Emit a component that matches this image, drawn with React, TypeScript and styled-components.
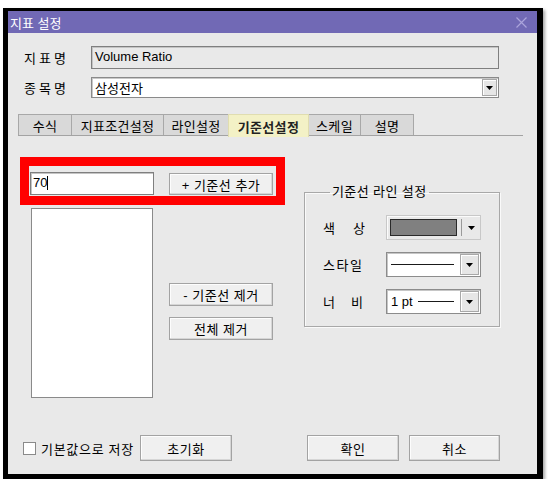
import React from 'react';
import styled, { createGlobalStyle } from 'styled-components';

const GlobalStyle = createGlobalStyle`
  html, body {
    margin: 0;
    padding: 0;
    background: #ffffff;
  }
  body {
    font-family: "Liberation Sans", "Noto Sans CJK KR", sans-serif;
    font-size: 13px;
    color: #000;
  }
`;

const Page = styled.div`
  padding: 8px 0 0 3px;
`;

const Window = styled.div`
  box-sizing: border-box;
  width: 540px;
  height: 471px;
  border-style: solid;
  border-color: #000;
  border-width: 3px 6px 5px 5px;
  background: #e9e9e9;
  display: flex;
  flex-direction: column;
  box-shadow: 2px 2px 3px rgba(0, 0, 0, 0.35);
`;

const TitleBar = styled.div`
  height: 22px;
  flex-shrink: 0;
  background: #7169b5;
  color: #fff;
  display: flex;
  align-items: center;
  justify-content: space-between;
  padding: 0 10px 0 2px;
  font-size: 13px;
`;

const Body = styled.div`
  flex: 1;
  display: flex;
  flex-direction: column;
  padding: 13px 0 13px;
`;

const FieldRow = styled.div<{ $top?: number }>`
  display: grid;
  grid-template-columns: 67px 408px;
  align-items: center;
  padding-left: 16px;
  margin-top: ${(p) => p.$top ?? 0}px;
`;

const Spaced = styled.span<{ $width: number }>`
  display: flex;
  justify-content: space-between;
  width: ${(p) => p.$width}px;
`;

const ReadonlyField = styled.div`
  box-sizing: border-box;
  height: 23px;
  border: 1px solid #7f7f7f;
  box-shadow: inset 1px 1px 0 #c4c4c4;
  background: #e9e9e9;
  padding: 2px 3px 0;
  line-height: 16px;
`;

const Combo = styled.div<{ $height: number }>`
  box-sizing: border-box;
  height: ${(p) => p.$height}px;
  border: 1px solid #8a8a8a;
  box-shadow: inset 1px 1px 0 #c8c8c8;
  background: #fff;
  display: flex;
  align-items: center;
  justify-content: space-between;
  padding: 0 1px 0 3px;
`;

const DropButton = styled.div<{ $w: number; $h: number }>`
  box-sizing: border-box;
  width: ${(p) => p.$w}px;
  height: ${(p) => p.$h}px;
  background: #e6e6e6;
  border: 1px solid #a8a8a8;
  box-shadow: inset 1px 1px 0 #fff;
  display: flex;
  align-items: center;
  justify-content: center;
`;

const TabBar = styled.div`
  display: flex;
  align-items: flex-start;
  margin: 16px 0 0 10px;
  width: 505px;
  height: 21px;
  border-bottom: 1px solid #a3a3a3;
`;

const Tab = styled.div<{ $w: number; $active?: boolean }>`
  box-sizing: border-box;
  width: ${(p) => p.$w}px;
  height: ${(p) => (p.$active ? 23 : 21)}px;
  margin-left: -1px;
  display: flex;
  align-items: center;
  justify-content: center;
  background: ${(p) => (p.$active ? '#f3f1c6' : '#d9d9d9')};
  border: 1px solid ${(p) => (p.$active ? '#e0ddb0' : '#a8a8a8')};
  border-bottom: none;
  font-weight: ${(p) => (p.$active ? 700 : 400)};
  color: ${(p) => (p.$active ? '#222' : '#000')};
  letter-spacing: 0.3px;
  position: relative;
  z-index: ${(p) => (p.$active ? 1 : 0)};
  &:first-child {
    margin-left: 0;
  }
`;

const TabContent = styled.div`
  display: flex;
  align-items: flex-start;
  padding-left: 22px;
  margin-top: 36px;
`;

const LeftPane = styled.div`
  position: relative;
  display: grid;
  grid-template-columns: 124px 104px;
  column-gap: 15px;
  row-gap: 13px;
`;

const Highlight = styled.div`
  position: absolute;
  left: -10px;
  top: -15px;
  width: 265px;
  height: 48px;
  box-sizing: border-box;
  border: 9px solid #ff0000;
  pointer-events: none;
`;

const TextInput = styled.div`
  box-sizing: border-box;
  height: 23px;
  border: 1px solid #7f7f7f;
  box-shadow: inset 1px 1px 0 #c4c4c4;
  background: #fff;
  padding: 2px 2px 0;
  display: flex;
  align-items: flex-start;
  line-height: 16px;
`;

const Caret = styled.span`
  display: inline-block;
  width: 1px;
  height: 14px;
  margin-top: 1px;
  background: #000;
`;

const ListBox = styled.div`
  box-sizing: border-box;
  height: 190px;
  width: 122px;
  margin-left: 1px;
  border: 1px solid #8a8a8a;
  background: #fff;
`;

const ButtonStack = styled.div`
  display: flex;
  flex-direction: column;
  gap: 11px;
  padding-top: 75px;
`;

const Button = styled.button<{ $w: number; $h: number; $top?: number; $left?: number }>`
  box-sizing: border-box;
  width: ${(p) => p.$w}px;
  height: ${(p) => p.$h}px;
  margin-top: ${(p) => p.$top ?? 0}px;
  margin-left: ${(p) => p.$left ?? 0}px;
  padding: 0;
  background: #f0f0f0;
  border: 1px solid #a3a3a3;
  box-shadow: inset -1px -1px 0 #d6d6d6, inset 1px 1px 0 #fdfdfd;
  font-family: "Liberation Sans", "Noto Sans CJK KR", sans-serif;
  font-size: 13px;
  letter-spacing: 0.5px;
  color: #000;
  white-space: pre;
`;

const GroupBox = styled.fieldset`
  box-sizing: border-box;
  width: 196px;
  height: 143px;
  margin: 12px 0 0 31px;
  padding: 15px 0 0 18px;
  border: 1px solid #a8a8a8;
  box-shadow: 1px 1px 0 #fafafa, inset 1px 1px 0 #fafafa;
  display: grid;
  grid-template-columns: 63px 95px;
  grid-auto-rows: 25px;
  row-gap: 12px;
  align-items: center;
  align-content: start;
`;

const Legend = styled.legend`
  margin-left: 7px;
  padding: 0 2px;
  line-height: 16px;
  letter-spacing: 0.4px;
`;

const ColorPicker = styled.div`
  box-sizing: border-box;
  height: 25px;
  border: 1px solid #c8c8c8;
  box-shadow: inset 1px 1px 0 #fbfbfb;
  display: flex;
  align-items: center;
  padding: 0 0 0 3px;
`;

const Swatch = styled.div<{ $color: string }>`
  box-sizing: border-box;
  width: 67px;
  height: 17px;
  background: ${(p) => p.$color};
  border: 1px solid #2a2a2a;
`;

const Divider = styled.div`
  width: 1px;
  height: 17px;
  margin-left: 4px;
  background: #9a9a9a;
`;

const ArrowCell = styled.div`
  flex: 1;
  display: flex;
  justify-content: center;
`;

const LineCombo = styled.div`
  box-sizing: border-box;
  height: 25px;
  border: 1px solid #8c8c8c;
  box-shadow: inset 1px 1px 0 #c6c6c6;
  background: #fff;
  display: flex;
  align-items: center;
  padding: 0 1px 0 4px;
`;

const LineText = styled.span`
  margin-right: 5px;
  line-height: 16px;
`;

const Line = styled.div`
  flex: 1;
  height: 1px;
  background: #1a1a1a;
  margin-right: 6px;
`;

const BottomRow = styled.div`
  margin-top: auto;
  display: flex;
  align-items: center;
  padding: 0 37px 0 15px;
`;

const Check = styled.div`
  box-sizing: border-box;
  width: 13px;
  height: 13px;
  background: #fff;
  border: 1px solid #8a8a8a;
  margin-right: 5px;
`;

const CheckLabel = styled.span`
  margin-right: 6px;
  letter-spacing: 0.7px;
`;

const Spacer = styled.div`
  flex: 1;
`;

const Arrow = () => (
  <svg width="7" height="4" viewBox="0 0 7 4">
    <path d="M0 0h7L3.5 4z" fill="#000" />
  </svg>
);

const CloseIcon = () => (
  <svg width="11" height="11" viewBox="0 0 11 11">
    <path d="M0.5 0.5l10 10M10.5 0.5l-10 10" stroke="#aba4db" strokeWidth="1.2" />
  </svg>
);

const SpacedText = ({ text, width }: { text: string; width: number }) => (
  <Spaced $width={width}>
    {text.split('').map((c, i) => (
      <span key={i}>{c}</span>
    ))}
  </Spaced>
);

const tabs = [
  { label: '수식', w: 54 },
  { label: '지표조건설정', w: 93 },
  { label: '라인설정', w: 66 },
  { label: '기준선설정', w: 81, active: true },
  { label: '스케일', w: 53 },
  { label: '설명', w: 54 },
];

export default function App() {
  return (
    <>
      <GlobalStyle />
      <Page>
        <Window>
          <TitleBar>
            <span>지표 설정</span>
            <CloseIcon />
          </TitleBar>
          <Body>
            <FieldRow>
              <SpacedText text="지표명" width={42} />
              <ReadonlyField>Volume Ratio</ReadonlyField>
            </FieldRow>
            <FieldRow $top={8}>
              <SpacedText text="종목명" width={42} />
              <Combo $height={21}>
                <span>삼성전자</span>
                <DropButton $w={15} $h={17}>
                  <Arrow />
                </DropButton>
              </Combo>
            </FieldRow>

            <TabBar>
              {tabs.map((t) => (
                <Tab key={t.label} $w={t.w} $active={t.active}>
                  {t.label}
                </Tab>
              ))}
            </TabBar>

            <TabContent>
              <LeftPane>
                <TextInput>
                  70
                  <Caret />
                </TextInput>
                <Button $w={104} $h={22} $top={1}>
                  {'+ 기준선 추가'}
                </Button>
                <ListBox />
                <ButtonStack>
                  <Button $w={104} $h={23}>
                    {'- 기준선 제거'}
                  </Button>
                  <Button $w={104} $h={23}>
                    {'전체 제거'}
                  </Button>
                </ButtonStack>
                <Highlight />
              </LeftPane>

              <GroupBox>
                <Legend>기준선 라인 설정</Legend>
                <SpacedText text="색상" width={42} />
                <ColorPicker>
                  <Swatch $color="#808080" />
                  <Divider />
                  <ArrowCell>
                    <Arrow />
                  </ArrowCell>
                </ColorPicker>
                <SpacedText text="스타일" width={39} />
                <LineCombo>
                  <Line />
                  <DropButton $w={19} $h={21}>
                    <Arrow />
                  </DropButton>
                </LineCombo>
                <SpacedText text="너비" width={40} />
                <LineCombo>
                  <LineText>1 pt</LineText>
                  <Line />
                  <DropButton $w={19} $h={21}>
                    <Arrow />
                  </DropButton>
                </LineCombo>
              </GroupBox>
            </TabContent>

            <BottomRow>
              <Check />
              <CheckLabel>기본값으로 저장</CheckLabel>
              <Button $w={92} $h={26}>
                초기화
              </Button>
              <Spacer />
              <Button $w={92} $h={26}>
                확인
              </Button>
              <Button $w={91} $h={26} $left={10}>
                취소
              </Button>
            </BottomRow>
          </Body>
        </Window>
      </Page>
    </>
  );
}
